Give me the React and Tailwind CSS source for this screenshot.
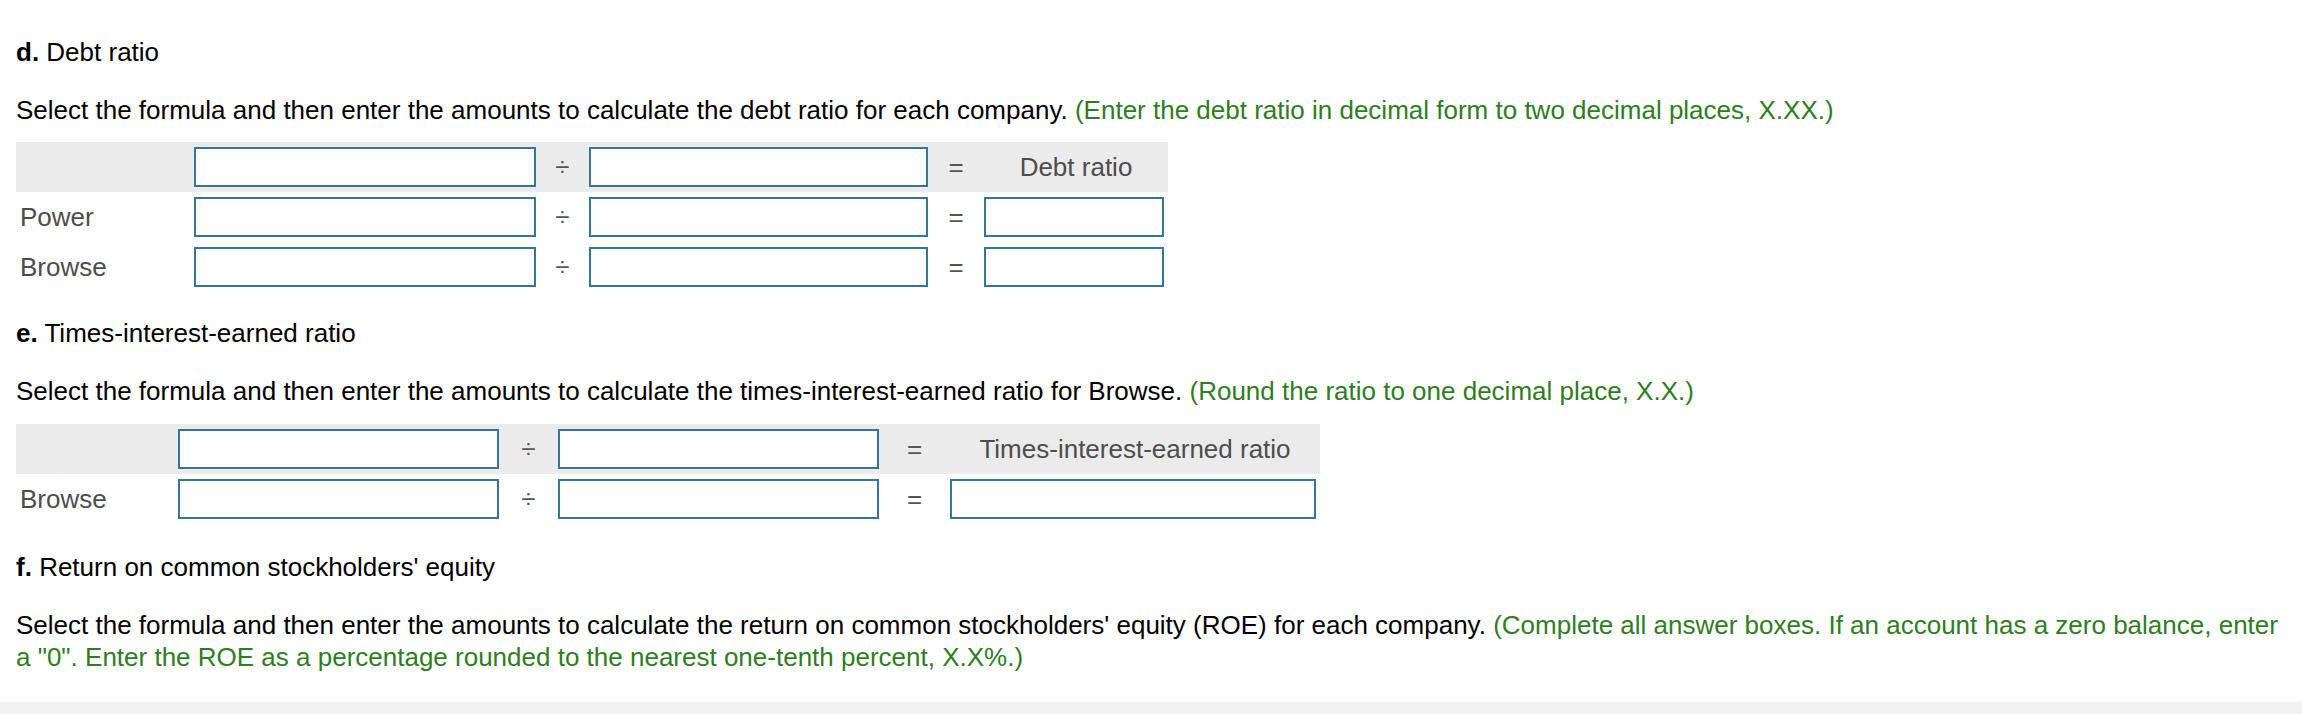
import React from "react";

const Field = ({ className = "" }) => (
  <input
    type="text"
    className={`h-10 border-2 border-[#33769a] bg-white outline-none ${className}`}
  />
);

const Op = ({ children, className = "" }) => (
  <span className={`flex justify-center text-[#555] ${className}`}>
    {children}
  </span>
);

const DebtRow = ({ label, header }) => (
  <div
    className={`flex items-center h-[50px] w-[1152px] ${
      header ? "bg-[#ebebeb]" : ""
    }`}
  >
    <span className="w-[178px] pl-1 text-[#4d4d4d]">{label}</span>
    <Field className="w-[342px]" />
    <Op className="w-[53px]">÷</Op>
    <Field className="w-[339px]" />
    <Op className="w-[56px]">=</Op>
    <div className="w-[184px]">
      {header ? (
        <div className="text-center text-[#4d4d4d]">Debt ratio</div>
      ) : (
        <Field className="w-[180px]" />
      )}
    </div>
  </div>
);

const TimesRow = ({ label, header }) => (
  <div
    className={`flex items-center h-[50px] w-[1304px] ${
      header ? "bg-[#ebebeb]" : ""
    }`}
  >
    <span className="w-[162px] pl-1 text-[#4d4d4d]">{label}</span>
    <Field className="w-[321px]" />
    <Op className="w-[59px]">÷</Op>
    <Field className="w-[321px]" />
    <Op className="w-[71px]">=</Op>
    <div className="w-[370px]">
      {header ? (
        <div className="text-center text-[#4d4d4d]">
          Times-interest-earned ratio
        </div>
      ) : (
        <Field className="w-[366px]" />
      )}
    </div>
  </div>
);

const Heading = ({ letter, children }) => (
  <p className="mb-[26px] text-black">
    <b>{letter}</b> {children}
  </p>
);

export default function App() {
  return (
    <div className="w-[2302px] min-h-[714px] bg-white font-['Liberation_Sans',Arial,sans-serif] text-[26px] leading-[32px]">
      <div className="pt-9 pl-4 pr-4">
        <Heading letter="d.">Debt ratio</Heading>
        <p className="mb-4 text-black">
          Select the formula and then enter the amounts to calculate the debt
          ratio for each company.{" "}
          <span className="text-[#2f7d1f]">
            (Enter the debt ratio in decimal form to two decimal places, X.XX.)
          </span>
        </p>
        <div className="mb-[25px]">
          <DebtRow header label="" />
          <DebtRow label="Power" />
          <DebtRow label="Browse" />
        </div>

        <Heading letter="e.">Times-interest-earned ratio</Heading>
        <p className="mb-[17px] text-black">
          Select the formula and then enter the amounts to calculate the
          times-interest-earned ratio for Browse.{" "}
          <span className="text-[#2f7d1f]">
            (Round the ratio to one decimal place, X.X.)
          </span>
        </p>
        <div className="mb-[27px]">
          <TimesRow header label="" />
          <TimesRow label="Browse" />
        </div>

        <Heading letter="f.">Return on common stockholders' equity</Heading>
        <p className="mb-[29px] text-black">
          Select the formula and then enter the amounts to calculate the return
          on common stockholders' equity (ROE) for each company.{" "}
          <span className="text-[#2f7d1f]">
            (Complete all answer boxes. If an account has a zero balance, enter
            a "0". Enter the ROE as a percentage rounded to the nearest
            one-tenth percent, X.X%.)
          </span>
        </p>
      </div>
      <div className="h-3 bg-[#f2f2f2]" />
    </div>
  );
}
